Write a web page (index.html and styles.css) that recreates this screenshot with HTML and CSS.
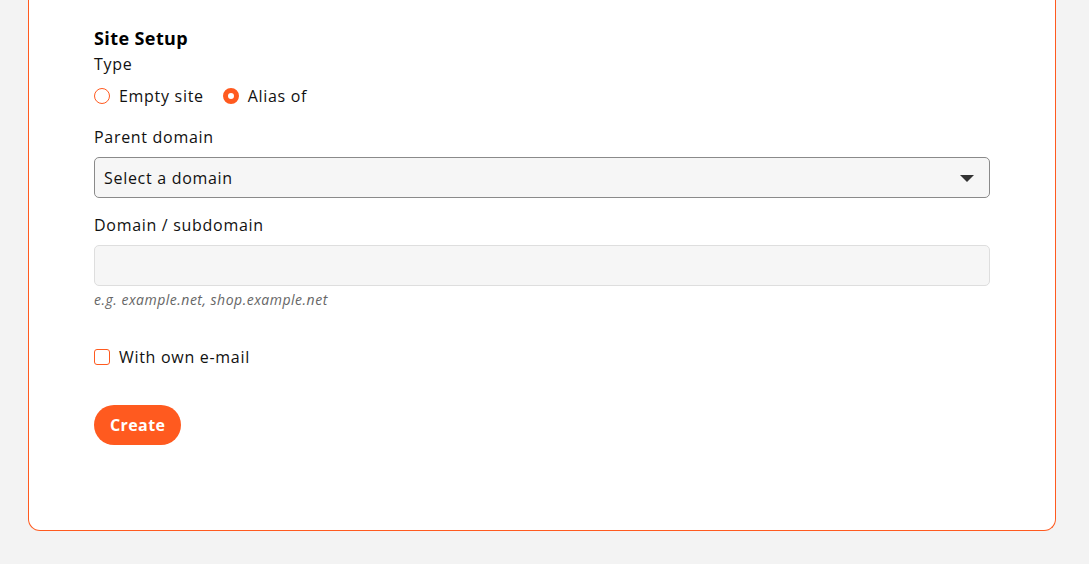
FILE: index.html
```html
<!DOCTYPE html>
<html lang="en">
<head>
<meta charset="utf-8">
<title>Site Setup</title>
<link rel="stylesheet" href="styles.css">
</head>
<body>
<main class="card">
  <form class="form">
    <h2 class="title">Site Setup</h2>
    <div class="field">
      <div class="label label-type">Type</div>
      <div class="radios">
        <label class="radio"><span class="dot"></span>Empty site</label>
        <label class="radio"><span class="dot dot-on"></span>Alias of</label>
      </div>
    </div>
    <div class="field field-parent">
      <div class="label">Parent domain</div>
      <div class="select">
        <span>Select a domain</span>
        <svg class="caret" width="14" height="8" viewBox="0 0 14 8"><path d="M0 0H14L7 7Z" fill="#333"/></svg>
      </div>
    </div>
    <div class="field field-domain">
      <div class="label">Domain / subdomain</div>
      <div class="input"></div>
      <div class="hint">e.g. example.net, shop.example.net</div>
    </div>
    <label class="check"><span class="box"></span>With own e-mail</label>
    <button type="button" class="btn">Create</button>
  </form>
</main>
</body>
</html>
```
FILE: styles.css
```css
* { box-sizing: border-box; }
html, body { margin: 0; padding: 0; }
body {
  background: #f3f3f3;
  font-family: "Open Sans", "Noto Sans", sans-serif;
  color: #111;
  font-size: 16px;
  letter-spacing: 0.7px;
  height: 564px;
  overflow: hidden;
}
.card {
  margin: 0 33px 0 28px;
  height: 531px;
  background: #fff;
  border: 1px solid #ff5a1f;
  border-top: none;
  border-radius: 0 0 12px 12px;
  padding: 26px 65px 0 65px;
}
.form { display: flex; flex-direction: column; align-items: flex-start; }
.title {
  margin: 0 0 2px;
  font-size: 18px;
  font-weight: 700;
  line-height: 24px;
  color: #000;
  letter-spacing: 0.4px;
}
.field { width: 100%; display: flex; flex-direction: column; }
.label { line-height: 24px; margin-bottom: 8px; }
.label-type { margin-bottom: 8px; }
.field-parent { margin-top: 17px; }
.field-domain { margin-top: 15px; }
.radios { display: flex; gap: 19px; }
.radio { display: flex; align-items: center; gap: 9px; line-height: 24px; }
.dot {
  width: 16px; height: 16px;
  border: 1px solid #ff5a1f;
  border-radius: 50%;
  background: #fff;
}
.dot-on { border: 5px solid #ff5a1f; }
.select {
  width: 100%;
  height: 41px;
  background: #f6f6f6;
  border: 1px solid #8a8a8a;
  border-radius: 5px;
  display: flex;
  align-items: center;
  justify-content: space-between;
  padding: 0 15px 0 9px;
}
.caret { margin-top: 2px; }
.input {
  width: 100%;
  height: 41px;
  background: #f6f6f6;
  border: 1px solid #dedede;
  border-radius: 5px;
}
.hint {
  margin-top: 4px;
  font-size: 14px;
  font-style: italic;
  color: #666;
  line-height: 20px;
  letter-spacing: 0.5px;
}
.check {
  margin-top: 35px;
  display: flex; align-items: center; gap: 9px;
  line-height: 24px;
}
.box {
  width: 16px; height: 16px;
  border: 1px solid #ff5a1f;
  border-radius: 3px;
}
.btn {
  margin-top: 36px;
  height: 40px;
  padding: 0 16px;
  border: none;
  border-radius: 20px;
  background: #ff5a1f;
  color: #fff;
  font-family: inherit;
  font-size: 16px;
  font-weight: 700;
  letter-spacing: 0.4px;
}
```
